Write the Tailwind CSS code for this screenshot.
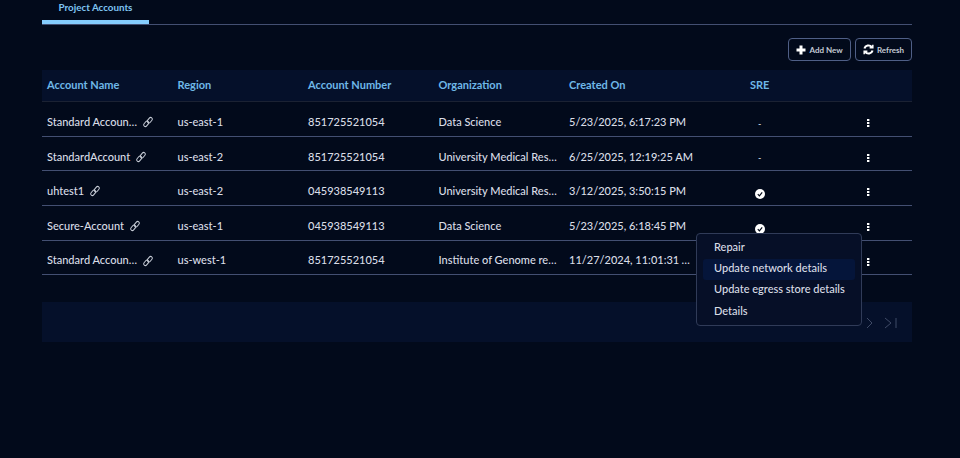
<!DOCTYPE html>
<html>
<head>
<meta charset="utf-8">
<script src="https://cdn.jsdelivr.net/npm/@tailwindcss/browser@4"></script>
</head>
<body class="bg-[#020a1b] font-['Lato',sans-serif] text-[11px] font-medium text-[#d9dde6]">
<div class="relative w-[960px] h-[458px] overflow-hidden px-[42px]">
 <div class="w-[870px]">
  <div class="h-[25px] border-b border-[#434f72]">
    <div class="w-[107px] h-[24px] border-b-4 border-[#85cdfd] pt-px text-center text-[9.8px] font-bold leading-[12px] text-[#7fc4f2]">Project Accounts</div>
  </div>
  <div class="flex justify-end gap-[4px] pt-[13px] h-[45px]">
    <button class="flex items-center justify-center gap-[3px] w-[63px] h-[23px] rounded-[4px] border border-[#4f5f86] text-[8px] font-bold text-[#c4c9d4]">
      <svg class="w-[10px] h-[10px]" viewBox="0 0 10 10"><path d="M5 .5v9M.5 5h9" stroke="#fff" stroke-width="3" fill="none"/></svg>Add New
    </button>
    <button class="flex items-center justify-center gap-[3px] w-[57px] h-[23px] rounded-[4px] border border-[#4f5f86] text-[8px] font-bold text-[#c4c9d4]">
      <svg class="w-[11px] h-[11px]" viewBox="0 0 10 10" fill="none" stroke="#fff" stroke-width="1.9"><path d="M1.3 4.2A3.8 3.8 0 0 1 8 2.8M8.7 5.8A3.8 3.8 0 0 1 2 7.2"/><path d="M9 .6v3H6M1 9.4v-3h3" stroke-width="1.2" fill="#fff"/></svg>Refresh
    </button>
  </div>
  <div class="grid grid-cols-[130.5px_130.5px_130.5px_130.5px_181px_1fr] h-[32px] items-center bg-[#05102a] border-b border-[#1b2233] pl-[5px] text-[11px] font-bold text-[#6fb8e8]">
    <div>Account Name</div><div>Region</div><div>Account Number</div><div>Organization</div><div>Created On</div><div>SRE</div>
  </div>
  <div class="grid grid-cols-[130.5px_130.5px_130.5px_130.5px_181px_116px_1fr] h-[35px] items-center border-b border-[#434f72] pl-[5px] pt-[6px]">
    <div class="flex items-center gap-[5px]"><span class="truncate w-[90px]">Standard Account 1</span><svg class="w-[12px] h-[12px]" viewBox="0 0 12 12" fill="none" stroke="#c9ced8" stroke-width="1"><rect x="-3" y="-1.7" width="6" height="3.4" rx="1.7" transform="translate(4.2 7.8) rotate(-50)"/><rect x="-3" y="-1.7" width="6" height="3.4" rx="1.7" transform="translate(7.8 4.2) rotate(-50)"/></svg></div>
    <div>us-east-1</div><div>851725521054</div><div class="truncate pr-[11px]">Data Science</div><div>5/23/2025, 6:17:23 PM</div>
    <div class="pl-[8px] pt-[3px] text-[9px]">-</div><div class="flex pt-[2px]"><svg class="w-[4px] h-[10px]" viewBox="0 0 4 10" fill="#fff"><rect x="1" y="1" width="2.4" height="2"/><rect x="1" y="4" width="2.4" height="2"/><rect x="1" y="7" width="2.4" height="2"/></svg></div>
  </div>
  <div class="grid grid-cols-[130.5px_130.5px_130.5px_130.5px_181px_116px_1fr] h-[34px] items-center border-b border-[#434f72] pl-[5px] pt-[7px]">
    <div class="flex items-center gap-[5px]"><span>StandardAccount</span><svg class="w-[12px] h-[12px]" viewBox="0 0 12 12" fill="none" stroke="#c9ced8" stroke-width="1"><rect x="-3" y="-1.7" width="6" height="3.4" rx="1.7" transform="translate(4.2 7.8) rotate(-50)"/><rect x="-3" y="-1.7" width="6" height="3.4" rx="1.7" transform="translate(7.8 4.2) rotate(-50)"/></svg></div>
    <div>us-east-2</div><div>851725521054</div><div class="truncate pr-[11px]">University Medical Research</div><div>6/25/2025, 12:19:25 AM</div>
    <div class="pl-[8px] pt-[2px] text-[9px]">-</div><div class="flex pt-px"><svg class="w-[4px] h-[10px]" viewBox="0 0 4 10" fill="#fff"><rect x="1" y="1" width="2.4" height="2"/><rect x="1" y="4" width="2.4" height="2"/><rect x="1" y="7" width="2.4" height="2"/></svg></div>
  </div>
  <div class="grid grid-cols-[130.5px_130.5px_130.5px_130.5px_181px_116px_1fr] h-[35px] items-center border-b border-[#434f72] pl-[5px] pt-[6px]">
    <div class="flex items-center gap-[5px]"><span>uhtest1</span><svg class="w-[12px] h-[12px]" viewBox="0 0 12 12" fill="none" stroke="#c9ced8" stroke-width="1"><rect x="-3" y="-1.7" width="6" height="3.4" rx="1.7" transform="translate(4.2 7.8) rotate(-50)"/><rect x="-3" y="-1.7" width="6" height="3.4" rx="1.7" transform="translate(7.8 4.2) rotate(-50)"/></svg></div>
    <div>us-east-2</div><div>045938549113</div><div class="truncate pr-[11px]">University Medical Research</div><div>3/12/2025, 3:50:15 PM</div>
    <div class="pl-[5px] pt-[6px]"><svg class="w-[10px] h-[10px]" viewBox="0 0 10 10"><circle cx="5" cy="5" r="5" fill="#fff"/><path d="M2.8 5.2 4.4 6.8 7.2 3.4" stroke="#020817" stroke-width="1.2" fill="none"/></svg></div>
    <div class="flex pt-[2px]"><svg class="w-[4px] h-[10px]" viewBox="0 0 4 10" fill="#fff"><rect x="1" y="1" width="2.4" height="2"/><rect x="1" y="4" width="2.4" height="2"/><rect x="1" y="7" width="2.4" height="2"/></svg></div>
  </div>
  <div class="grid grid-cols-[130.5px_130.5px_130.5px_130.5px_181px_116px_1fr] h-[35px] items-center border-b border-[#434f72] pl-[5px] pt-[6px]">
    <div class="flex items-center gap-[5px]"><span>Secure-Account</span><svg class="w-[12px] h-[12px]" viewBox="0 0 12 12" fill="none" stroke="#c9ced8" stroke-width="1"><rect x="-3" y="-1.7" width="6" height="3.4" rx="1.7" transform="translate(4.2 7.8) rotate(-50)"/><rect x="-3" y="-1.7" width="6" height="3.4" rx="1.7" transform="translate(7.8 4.2) rotate(-50)"/></svg></div>
    <div>us-east-1</div><div>045938549113</div><div class="truncate pr-[11px]">Data Science</div><div>5/23/2025, 6:18:45 PM</div>
    <div class="pl-[5px] pt-[6px]"><svg class="w-[10px] h-[10px]" viewBox="0 0 10 10"><circle cx="5" cy="5" r="5" fill="#fff"/><path d="M2.8 5.2 4.4 6.8 7.2 3.4" stroke="#020817" stroke-width="1.2" fill="none"/></svg></div>
    <div class="flex pt-[2px]"><svg class="w-[4px] h-[10px]" viewBox="0 0 4 10" fill="#fff"><rect x="1" y="1" width="2.4" height="2"/><rect x="1" y="4" width="2.4" height="2"/><rect x="1" y="7" width="2.4" height="2"/></svg></div>
  </div>
  <div class="grid grid-cols-[130.5px_130.5px_130.5px_130.5px_181px_116px_1fr] h-[34px] items-center border-b border-[#434f72] pl-[5px] pt-[6px]">
    <div class="flex items-center gap-[5px]"><span class="truncate w-[90px]">Standard Account 2</span><svg class="w-[12px] h-[12px]" viewBox="0 0 12 12" fill="none" stroke="#c9ced8" stroke-width="1"><rect x="-3" y="-1.7" width="6" height="3.4" rx="1.7" transform="translate(4.2 7.8) rotate(-50)"/><rect x="-3" y="-1.7" width="6" height="3.4" rx="1.7" transform="translate(7.8 4.2) rotate(-50)"/></svg></div>
    <div>us-west-1</div><div>851725521054</div><div class="truncate pr-[9px]">Institute of Genome research</div><div class="truncate pr-[58px]">11/27/2024, 11:01:31 AM</div>
    <div></div><div class="flex pt-[2px]"><svg class="w-[4px] h-[10px]" viewBox="0 0 4 10" fill="#fff"><rect x="1" y="1" width="2.4" height="2"/><rect x="1" y="4" width="2.4" height="2"/><rect x="1" y="7" width="2.4" height="2"/></svg></div>
  </div>
  <div class="mt-[27px] h-[40px] bg-[#05102a] flex items-center justify-end gap-[10px] pr-[14px] pt-[1px]">
    <svg class="w-[8px] h-[12px]" viewBox="0 0 8 12" fill="none" stroke="#3f4a66" stroke-width="1"><path d="M1 1l5 5-5 5"/></svg>
    <svg class="w-[14px] h-[12px]" viewBox="0 0 14 12" fill="none" stroke="#3f4a66" stroke-width="1"><path d="M1 1l6 5-6 5M12 1v10"/></svg>
  </div>
 </div>
  <div class="absolute left-[696px] top-[233px] w-[166px] h-[93px] rounded-[4px] border border-[#303b58] bg-[#060f27] px-[6px] pt-[4px] text-[#d9dde6]">
    <div class="h-[21px] pl-[11px] leading-[17px]">Repair</div>
    <div class="h-[21px] rounded-[3px] bg-[#05153a] pl-[11px] leading-[17px]">Update network details</div>
    <div class="h-[21px] pl-[11px] leading-[18px] whitespace-nowrap">Update egress store details</div>
    <div class="h-[21px] pl-[11px] leading-[19px]">Details</div>
  </div>
</div>
</body>
</html>
